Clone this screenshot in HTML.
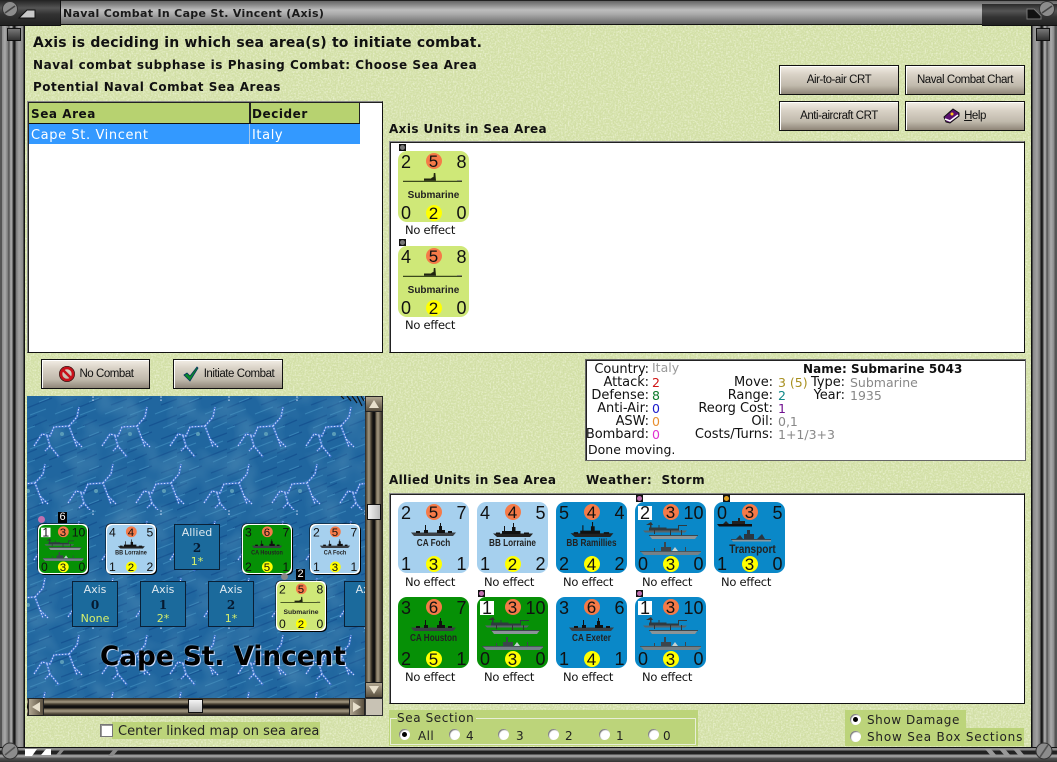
<!DOCTYPE html>
<html><head><meta charset="utf-8"><title>Naval Combat</title>
<style>
html,body{margin:0;padding:0;background:#8a8a8a}
#p{position:relative;width:1057px;height:762px;overflow:hidden;background:#d2dfa6;font-family:"DejaVu Sans","Liberation Sans",sans-serif;color:#000}
#p div,#p span,#p svg{position:absolute}
.t{white-space:nowrap;line-height:14px}
.h{font-weight:bold;color:#111}
.box{background:#fff;border:1px solid #555;box-shadow:inset 1px 1px 0 #222;box-sizing:border-box}
.btn{box-sizing:border-box;border:1px solid #111;background:linear-gradient(#f3eee6 0,#d9d2c6 30%,#c0b9ac 70%,#8f8678 100%);font:11.5px "Liberation Sans",sans-serif;letter-spacing:-.45px;color:#111;text-align:center;line-height:28px;height:30px;box-shadow:inset 1px 1px 0 #fff}
.c{width:71px;height:71px;border-radius:9px;font:18px/18px "Liberation Sans",sans-serif;color:#111}
.c span{text-align:center;white-space:nowrap}
.c .o,.c .y{width:16px;height:16px;left:27.500px;border-radius:50%;font-size:17px;line-height:17px}
.c .o{top:2px;background:#f57a48}
.c .y{top:54px;background:#ff0;line-height:17px}
.c .l{left:3px}.c .r{right:2.500px}.c .tp{top:2px}.c .bt{top:53px}
.c .w{left:3px;top:4px;background:#fff;width:14px;height:14px;line-height:15px}
.c .n{left:0;width:71px;top:36px;font:bold 10px/12px "Liberation Sans",sans-serif;color:#222;transform:scaleX(.82)}
.c .n.s{top:39px;transform:none}
.ne{font:11.500px/14px "DejaVu Sans",sans-serif;letter-spacing:-.25px;color:#111;white-space:nowrap}
.ax{box-sizing:border-box;width:46px;height:46px;background:#1b6a9c;border:1px solid #0a2036;color:#dfe9ef;text-align:center;font:11px/14px "DejaVu Sans",sans-serif}
.ax span{left:0;width:44px}
.ax .a{top:1px}.ax .b{top:16px;font-weight:bold;font-size:12px;color:#061a30;font-family:"DejaVu Serif","DejaVu Sans",serif}.ax .d{top:30px;color:#d6f06c}
.rad{width:11px;height:11px;border-radius:50%;background:#fff;box-shadow:inset 1px 1px 1px #777}
.rad.on::after{content:"";position:absolute;left:3px;top:3px;width:5px;height:5px;border-radius:50%;background:#000}
.lb{font:12px/14px "DejaVu Sans",sans-serif;color:#222;white-space:nowrap;letter-spacing:.4px}
.ir{font:13px/13px "DejaVu Sans",sans-serif;letter-spacing:-.05px;color:#111;white-space:nowrap;text-align:right}
.iv{font:12.500px/13px "DejaVu Sans",sans-serif;white-space:nowrap}
.bd{width:50px;height:50px;background:#fff;border-radius:5px;box-shadow:1px 1px 0 #000,-.5px -.5px 0 #000}
.mc{transform:scale(.676);transform-origin:0 0;top:129px}
</style></head><body><div id="p">

<svg width="0" height="0" style="left:0;top:0"><defs>
<symbol id="sub" viewBox="0 0 59 16"><path d="M0 14.800H59V16H0Z" fill="#3c4a1c"/><path d="M21 14.800V12.500h7l1-1 1.500-.5.300-4h1.500l.700 7.800Z" fill="#20240f"/><path d="M54 14h5v1h-5Z" fill="#8a8f70"/></symbol>
<symbol id="ca" viewBox="0 0 45 14"><path d="M0 9.500H45L42 13H3Z" fill="#3a3f44"/><path d="M13 10V7h1V2h1v5h2v3ZM26 10V7h2V3h1V0h1v3h1v4h3v3ZM5 8h4v2H5ZM37 8h4v2h-4Z" fill="#111"/></symbol>
<symbol id="bb" viewBox="0 0 40 14"><path d="M0 10.500H40L37 14H4Z" fill="#222"/><path d="M9 11V8h2V3h1v5h7V4h1V0h1v4h1.500v4h5v3ZM3 9.500h4V11H3ZM31 9.500h5V11h-5Z" fill="#111"/></symbol>
<symbol id="cv" viewBox="0 0 61 44"><path d="M3 9.500H47L45 11.500H5Z" fill="#59646a"/><path d="M9 9.500V6.500h1V3h1.500V6.500h7V4h1V6.500h7V7.500H38V4h9V5H39V9.500Z" fill="#2f3a40"/><path d="M6 4 11 1 13 4ZM14 9v4h1V9ZM30 9v5h1V9ZM41 9v5h1V9Z" fill="#333"/><path d="M9 14H58L55 18H12Z" fill="#8b9498"/><path d="M9 14H58V15H9Z" fill="#3c464c"/><path d="M0 30H61V31.500L58 34H4Z" fill="#748188"/><path d="M0 30H61V30.800H0Z" fill="#3d484e"/><path d="M21 30V26h3V21h2V26h5V30ZM45 30V26h1V30ZM14 30V27h1V30Z" fill="#3c464c"/><path d="M32 30 35 26 38 30Z" fill="#c4d0d0"/></symbol>
<symbol id="tr" viewBox="0 0 61 34"><path d="M0 7H35V9.500H2Z" fill="#111"/><path d="M6 7 9 4 12 7ZM15 7V4H21V1h2V4h5V7Z" fill="#222"/><path d="M14 22H54V24.500H16Z" fill="#8b98a0"/><path d="M14 22H54V23H14Z" fill="#3a4650"/><path d="M19 22l4-4 3 4ZM27 22V17h3V13h3V17h4V22ZM40 22l5-5 3 5Z" fill="#2a3640"/></symbol>
<symbol id="noi" viewBox="0 0 16 16"><circle cx="8" cy="8" r="6" fill="none" stroke="#c8101a" stroke-width="2.600"/><path d="M3.500 3.500 12.500 12.500" stroke="#c8101a" stroke-width="2.600"/><circle cx="8" cy="8" r="7.600" fill="none" stroke="#300" stroke-width=".7"/></symbol>
<pattern id="sea" width="68" height="114" patternUnits="userSpaceOnUse">
<g fill="none" stroke="#3f74d4" stroke-width="2.200" opacity=".8">
<path d="M7 50 15 38 23 40 27 31 42 30 47 43 55 51M42 30 50 21 52 11M20 40 23 50 32 61M23 50 18 55M47 43 50 51"/>
<path d="M-27 107-19 95-11 97-7 88 8 87 13 100 21 108M8 87 16 78 18 68M-14 97-11 107-2 118M-11 107-16 112M13 100 16 108"/>
<path d="M41 107 49 95 57 97 61 88 76 87 81 100 89 108M76 87 84 78 86 68M54 97 57 107 66 118M57 107 52 112"/>
</g>
<g fill="none" stroke="#d3e2ff" stroke-width="1" stroke-dasharray="1.600 1.500">
<path d="M7 50 15 38 23 40 27 31 42 30 47 43 55 51M42 30 50 21 52 11M20 40 23 50 32 61M23 50 18 55M47 43 50 51"/>
<path d="M-27 107-19 95-11 97-7 88 8 87 13 100 21 108M8 87 16 78 18 68M-14 97-11 107-2 118M-11 107-16 112M13 100 16 108"/>
<path d="M41 107 49 95 57 97 61 88 76 87 81 100 89 108M76 87 84 78 86 68M54 97 57 107 66 118M57 107 52 112"/>
<path d="M66 5V-4M-2 5V-4"/>
</g><circle cx="35" cy="38" r="2" fill="#5a9cb8"/><circle cx="1" cy="95" r="2" fill="#5a9cb8"/><circle cx="69" cy="95" r="2" fill="#5a9cb8"/></pattern>
<pattern id="rain" width="50" height="34" patternUnits="userSpaceOnUse">
<g stroke="#13508f" stroke-width="1.300" fill="none"><path d="M0 12 25 2M22 30 50 19M6 30 20 24M34 9 50 3M-2 24 10 19"/></g>
<g stroke="#3c89bb" stroke-width="1" fill="none"><path d="M3 19 19 13M28 18 46 11M12 6 22 2M36 32 50 26M0 33 8 30"/></g>
</pattern>
<filter id="nz" x="0" y="0" width="100%" height="100%"><feTurbulence type="fractalNoise" baseFrequency=".6" numOctaves="2" seed="4"/><feColorMatrix values="0 0 0 0 .9 0 0 0 0 .94 0 0 0 0 .74 0 0 0 1.700 -.7"/></filter>
<filter id="mot" x="0" y="0" width="100%" height="100%"><feTurbulence type="fractalNoise" baseFrequency=".035" numOctaves="2" seed="9"/><feColorMatrix values="0 0 0 0 .1 0 0 0 0 .3 0 0 0 0 .5 0 0 0 2.200 -.9"/></filter>
</defs></svg>

<svg width="1057" height="762" style="left:0;top:0"><rect width="1057" height="762" filter="url(#nz)"/></svg>

<!-- frame -->
<div style="left:0;top:0;width:25px;height:762px;background:linear-gradient(90deg,#555 0,#555 2px,#8a8a8a 2px,#aaa 5px,#777 8px,#444 9px,#999 10px,#a8a8a8 12px,#333 13px,#111 15px,#777 16px,#a2a2a2 19px,#888 23px,#111 24px,#111 25px)"></div>
<div style="left:1031px;top:0;width:26px;height:762px;background:linear-gradient(90deg,#111 0,#111 1px,#888 2px,#a2a2a2 6px,#777 9px,#111 10px,#333 12px,#a8a8a8 13px,#999 15px,#444 16px,#777 17px,#aaa 20px,#8a8a8a 23px,#555 24px)"></div>
<div style="left:0;top:0;width:1057px;height:25px;box-sizing:border-box;border-top:1px solid #222;border-bottom:1px solid #111;background:linear-gradient(#666 0,#808080 3px,#bdbdbd 9px,#ababab 13px,#8a8a8a 18px,#6a6a6a 23px)"></div>
<div style="left:0;top:0;width:60px;height:25px;border-right:1px solid #111;border-bottom:1px solid #111;background:linear-gradient(#222 0,#555 8px,#333 14px,#222 24px)"></div>
<div style="left:982px;top:4px;width:75px;height:21px;border-bottom:1px solid #111;background:linear-gradient(#2a2a2a 0,#555 7px,#333 13px,#222 21px)"></div>
<svg width="60" height="25" style="left:0;top:0"><circle cx="10" cy="9" r="7.500" fill="#8c8c8c" stroke="#333"/><path d="M5 13 15 6" stroke="#444" stroke-width="1.600"/><path d="M19 18 27 10H35V18Z" fill="#c9c9c9" stroke="#111"/></svg>
<svg width="60" height="25" style="left:997px;top:0"><circle cx="50" cy="9" r="7.500" fill="#8c8c8c" stroke="#333"/><path d="M45 13 55 6" stroke="#444" stroke-width="1.600"/><path d="M30 9H37L44 16V19H30Z" fill="#111" stroke="#777"/></svg>
<div style="left:7px;top:28px;width:14px;height:13px;background:linear-gradient(#777,#333);border:1px solid #111;box-sizing:border-box"></div>
<div style="left:1036px;top:28px;width:14px;height:13px;background:linear-gradient(#777,#333);border:1px solid #111;box-sizing:border-box"></div>
<div style="left:0;top:747px;width:1057px;height:15px;border-top:1px solid #111;box-sizing:border-box;background:linear-gradient(#888 0,#888 2px,#222 3px,#222 6px,#999 7px,#999 9px,#555 10px,#333 14px)"></div>
<svg width="120" height="15" style="left:22px;top:747px"><path d="M3 2H15L10 9H3ZM19 8l5-6h5v6Z" fill="#fff"/><path d="M34 8l5-6h4l-5 6ZM86 9l6-7h5l-6 7Z" fill="#888"/></svg>
<svg width="50" height="15" style="left:985px;top:747px"><path d="M0 2h6l6 7H6ZM14 2h6l6 7h-6ZM28 2h6l6 7h-6Z" fill="#999"/></svg>
<svg width="26" height="26" style="left:1031px;top:736px"><circle cx="13" cy="15" r="8" fill="#8c8c8c" stroke="#333"/><path d="M9 21 17 9" stroke="#555" stroke-width="1.600"/></svg>
<svg width="26" height="26" style="left:0;top:736px"><circle cx="10" cy="15" r="8" fill="#8c8c8c" stroke="#333"/><path d="M5 19 15 11" stroke="#555" stroke-width="1.600"/></svg>

<div class="t" style="left:63px;top:7px;font-weight:bold;font-size:11px;color:#1a1a1a;letter-spacing:.32px">Naval Combat In Cape St. Vincent (Axis)</div>
<div class="t h" style="left:33px;top:35px;font-size:14px;line-height:16px;letter-spacing:.18px">Axis is deciding in which sea area(s) to initiate combat.</div>
<div class="t h" style="left:33px;top:58px;font-size:12px;letter-spacing:.54px">Naval combat subphase is Phasing Combat: Choose Sea Area</div>
<div class="t h" style="left:33px;top:80px;font-size:12px;letter-spacing:.5px">Potential Naval Combat Sea Areas</div>

<!-- list -->
<div class="box" style="left:27px;top:101px;width:356px;height:252px;border-color:#111;border-top-color:#888;border-left-color:#888"></div>
<div style="left:29px;top:103px;width:331px;height:21px;background:#b7d270;border-bottom:1px solid #111;box-sizing:border-box"></div>
<div style="left:249px;top:103px;width:2px;height:20px;background:#222"></div>
<div style="left:359px;top:103px;width:1px;height:20px;background:#222"></div>
<div class="t" style="left:31px;top:107px;font-weight:bold;font-size:12px;letter-spacing:.55px;color:#111">Sea Area</div>
<div class="t" style="left:252px;top:107px;font-weight:bold;font-size:12px;letter-spacing:.55px;color:#111">Decider</div>
<div style="left:29px;top:124px;width:331px;height:20px;background:#3399ff"></div>
<div style="left:249px;top:124px;width:1px;height:20px;background:#a9c8e8"></div>
<div class="t" style="left:31px;top:129px;font-size:13px;letter-spacing:.6px;color:#fff">Cape St. Vincent</div>
<div class="t" style="left:252px;top:129px;font-size:13px;letter-spacing:.6px;color:#fff">Italy</div>

<!-- top buttons -->
<div class="btn" style="left:779px;top:65px;width:120px">Air-to-air CRT</div>
<div class="btn" style="left:905px;top:65px;width:120px">Naval Combat Chart</div>
<div class="btn" style="left:779px;top:101px;width:120px">Anti-aircraft CRT</div>
<div class="btn" style="left:905px;top:101px;width:120px;padding-left:20px"><u>H</u>elp</div>
<svg width="18" height="16" style="left:943px;top:108px"><path d="M1 9 10 1 16 5 16 8 7 15 3 14Z" fill="#5a1070" stroke="#111"/><path d="M2 11 7 13 15 7" fill="none" stroke="#fff" stroke-width="1.500"/><circle cx="9" cy="6" r="1.500" fill="#ffc820"/></svg>

<!-- action buttons -->
<div class="btn" style="left:41px;top:359px;width:109px;padding-left:22px">No Combat</div>
<div class="btn" style="left:173px;top:359px;width:110px;padding-left:22px">Initiate Combat</div>
<svg width="16" height="16" style="left:59px;top:366px"><use href="#noi"/></svg>
<svg width="16" height="16" style="left:183px;top:366px"><path d="M1 9 4 7 7 10 14 1 15 2 7 15Z" fill="#0a8a2a" stroke="#05335f" stroke-width=".8"/></svg>

<!-- axis panel -->
<div class="t h" style="left:389px;top:122px;font-size:12px;letter-spacing:.4px">Axis Units in Sea Area</div>
<div class="box" style="left:389px;top:141px;width:636px;height:212px;border-color:#111;border-top-color:#888;border-left-color:#888"></div>
<div style="left:399px;top:144px;width:7px;height:7px;background:#111"></div><div style="left:400px;top:145px;width:5px;height:5px;background:#777;border-radius:50%"></div>
<div class="c" style="left:398px;top:151px;background:#cfe878"><span class="l tp">2</span><span class="o">5</span><span class="r tp">8</span><svg width="59" height="16" style="left:5px;top:15px"><use href="#sub"/></svg><span class="n s">Submarine</span><span class="l bt">0</span><span class="y">2</span><span class="r bt">0</span></div>
<div class="ne" style="left:405px;top:223px">No effect</div>
<div style="left:399px;top:239px;width:7px;height:7px;background:#111"></div><div style="left:400px;top:240px;width:5px;height:5px;background:#777;border-radius:50%"></div>
<div class="c" style="left:398px;top:246px;background:#cfe878"><span class="l tp">4</span><span class="o">5</span><span class="r tp">8</span><svg width="59" height="16" style="left:5px;top:15px"><use href="#sub"/></svg><span class="n s">Submarine</span><span class="l bt">0</span><span class="y">2</span><span class="r bt">0</span></div>
<div class="ne" style="left:405px;top:318px">No effect</div>

<!-- info -->
<div class="box" style="left:585px;top:359px;width:441px;height:102px;background:#fff;border-color:#666"></div>
<div class="ir" style="left:549px;top:363px;width:100px">Country:</div><div class="iv" style="left:652px;top:361px;color:#999">Italy</div>
<div class="ir" style="left:549px;top:376px;width:100px">Attack:</div><div class="iv" style="left:652px;top:376px;color:#d01515">2</div>
<div class="ir" style="left:549px;top:389px;width:100px">Defense:</div><div class="iv" style="left:652px;top:389px;color:#0a7a2a">8</div>
<div class="ir" style="left:549px;top:402px;width:100px">Anti-Air:</div><div class="iv" style="left:652px;top:402px;color:#1a1acc">0</div>
<div class="ir" style="left:549px;top:415px;width:100px">ASW:</div><div class="iv" style="left:652px;top:415px;color:#e89030">0</div>
<div class="ir" style="left:549px;top:428px;width:100px">Bombard:</div><div class="iv" style="left:652px;top:428px;color:#e030d0">0</div>
<div class="iv" style="left:588px;top:443px;color:#111">Done moving.</div>
<div class="ir" style="left:673px;top:376px;width:100px">Move:</div><div class="iv" style="left:778px;top:376px;color:#a89020">3 (5)</div>
<div class="ir" style="left:673px;top:389px;width:100px">Range:</div><div class="iv" style="left:778px;top:389px;color:#108888">2</div>
<div class="ir" style="left:673px;top:402px;width:100px">Reorg Cost:</div><div class="iv" style="left:778px;top:402px;color:#701090">1</div>
<div class="ir" style="left:673px;top:415px;width:100px">Oil:</div><div class="iv" style="left:778px;top:415px;color:#888">0,1</div>
<div class="ir" style="left:673px;top:428px;width:100px">Costs/Turns:</div><div class="iv" style="left:778px;top:428px;color:#888">1+1/3+3</div>
<div class="ir" style="left:745px;top:376px;width:100px">Type:</div><div class="iv" style="left:850px;top:376px;color:#888">Submarine</div>
<div class="ir" style="left:745px;top:389px;width:100px">Year:</div><div class="iv" style="left:850px;top:389px;color:#888">1935</div>
<div class="iv" style="left:803px;top:363px;font-weight:bold;font-size:12px;color:#111;letter-spacing:.05px">Name: Submarine 5043</div>

<!-- allied panel -->
<div class="t h" style="left:389px;top:473px;font-size:12px;letter-spacing:.33px">Allied Units in Sea Area</div>
<div class="t h" style="left:586px;top:473px;font-size:12px;letter-spacing:.5px">Weather:&nbsp; Storm</div>
<div class="box" style="left:389px;top:493px;width:636px;height:211px;border-color:#111;border-top-color:#888;border-left-color:#888"></div>

<div class="c" style="left:398px;top:502px;background:#a6d0ee"><span class="l tp">2</span><span class="o">5</span><span class="r tp">7</span><svg width="45" height="14" style="left:13px;top:21px"><use href="#ca"/></svg><span class="n">CA Foch</span><span class="l bt">1</span><span class="y">3</span><span class="r bt">1</span></div>
<div class="ne" style="left:405px;top:575px">No effect</div>
<div class="c" style="left:477px;top:502px;background:#a6d0ee"><span class="l tp">4</span><span class="o">4</span><span class="r tp">5</span><svg width="40" height="14" style="left:16px;top:21px"><use href="#bb"/></svg><span class="n">BB Lorraine</span><span class="l bt">1</span><span class="y">2</span><span class="r bt">2</span></div>
<div class="ne" style="left:484px;top:575px">No effect</div>
<div class="c" style="left:556px;top:502px;background:#0a88c8"><span class="l tp">5</span><span class="o">4</span><span class="r tp">4</span><svg width="44" height="15" style="left:14px;top:20px"><use href="#bb"/></svg><span class="n">BB Ramillies</span><span class="l bt">2</span><span class="y">4</span><span class="r bt">2</span></div>
<div class="ne" style="left:563px;top:575px">No effect</div>
<div style="left:636px;top:495px;width:7px;height:7px;background:#111"></div><div style="left:637px;top:496px;width:5px;height:5px;background:#c070b0;border-radius:50%"></div>
<div class="c" style="left:635px;top:502px;background:#0a88c8"><span class="w">2</span><span class="o">3</span><span class="r tp">10</span><svg width="61" height="44" style="left:5px;top:19px"><use href="#cv"/></svg><span class="l bt">0</span><span class="y">3</span><span class="r bt">0</span></div>
<div class="ne" style="left:642px;top:575px">No effect</div>
<div style="left:723px;top:495px;width:7px;height:7px;background:#111"></div><div style="left:724px;top:496px;width:5px;height:5px;background:#e0a020;border-radius:50%"></div>
<div class="c" style="left:714px;top:502px;background:#0a88c8"><span class="l tp">0</span><span class="o">3</span><span class="r tp">5</span><svg width="61" height="34" style="left:3px;top:15px"><use href="#tr"/></svg><span class="n" style="font-size:12px;top:41px;left:3px;transform:scaleX(.84)">Transport</span><span class="l bt">1</span><span class="y">3</span><span class="r bt">0</span></div>
<div class="ne" style="left:721px;top:575px">No effect</div>

<div class="c" style="left:398px;top:597px;background:#069006"><span class="l tp">3</span><span class="o">6</span><span class="r tp">7</span><svg width="45" height="14" style="left:13px;top:21px"><use href="#ca"/></svg><span class="n">CA Houston</span><span class="l bt">2</span><span class="y">5</span><span class="r bt">1</span></div>
<div class="ne" style="left:405px;top:670px">No effect</div>
<div style="left:478px;top:590px;width:7px;height:7px;background:#111"></div><div style="left:479px;top:591px;width:5px;height:5px;background:#c070b0;border-radius:50%"></div>
<div class="c" style="left:477px;top:597px;background:#069006"><span class="w">1</span><span class="o">3</span><span class="r tp">10</span><svg width="61" height="44" style="left:5px;top:19px"><use href="#cv"/></svg><span class="l bt">0</span><span class="y">3</span><span class="r bt">0</span></div>
<div class="ne" style="left:484px;top:670px">No effect</div>
<div class="c" style="left:556px;top:597px;background:#0a88c8"><span class="l tp">3</span><span class="o">6</span><span class="r tp">6</span><svg width="45" height="14" style="left:13px;top:21px"><use href="#ca"/></svg><span class="n">CA Exeter</span><span class="l bt">1</span><span class="y">4</span><span class="r bt">1</span></div>
<div class="ne" style="left:563px;top:670px">No effect</div>
<div style="left:636px;top:590px;width:7px;height:7px;background:#111"></div><div style="left:637px;top:591px;width:5px;height:5px;background:#c070b0;border-radius:50%"></div>
<div class="c" style="left:635px;top:597px;background:#0a88c8"><span class="w">1</span><span class="o">3</span><span class="r tp">10</span><svg width="61" height="44" style="left:5px;top:19px"><use href="#cv"/></svg><span class="l bt">0</span><span class="y">3</span><span class="r bt">0</span></div>
<div class="ne" style="left:642px;top:670px">No effect</div>

<!-- map -->
<div style="left:27px;top:396px;width:338px;height:302px;overflow:hidden;background:#20669f">
<svg width="338" height="302" style="left:0;top:0"><rect width="338" height="302" fill="url(#rain)" opacity=".8"/><rect width="338" height="302" filter="url(#mot)" opacity=".5"/><rect width="338" height="302" fill="url(#sea)"/></svg>
<svg width="25" height="14" style="left:313px;top:0"><path d="M1 0 4 3M7 0 11 5M12 0 17 7M17 0 22 10M21 0 24 5" stroke="#111" stroke-width="1.200"/></svg>

<div class="ax" style="left:147px;top:128px"><span class="a">Allied</span><span class="b">2</span><span class="d">1*</span></div>
<div class="ax" style="left:45px;top:185px"><span class="a">Axis</span><span class="b">0</span><span class="d">None</span></div>
<div class="ax" style="left:113px;top:185px"><span class="a">Axis</span><span class="b">1</span><span class="d">2*</span></div>
<div class="ax" style="left:181px;top:185px"><span class="a">Axis</span><span class="b">2</span><span class="d">1*</span></div>
<div class="ax" style="left:317px;top:185px"><span class="a">Axis</span></div>

<div class="bd" style="left:11px;top:128px"></div>
<div class="c mc" style="left:12px;background:#069006"><span class="w">1</span><span class="o">3</span><span class="r tp">10</span><svg width="61" height="44" style="left:5px;top:19px"><use href="#cv"/></svg><span class="l bt">0</span><span class="y">3</span><span class="r bt">0</span></div>
<div class="bd" style="left:79px;top:128px"></div>
<div class="c mc" style="left:80px;background:#a6d0ee"><span class="l tp">4</span><span class="o">4</span><span class="r tp">5</span><svg width="40" height="14" style="left:16px;top:21px"><use href="#bb"/></svg><span class="n">BB Lorraine</span><span class="l bt">1</span><span class="y">2</span><span class="r bt">2</span></div>
<div class="bd" style="left:215px;top:128px"></div>
<div class="c mc" style="left:216px;background:#069006"><span class="l tp">3</span><span class="o">6</span><span class="r tp">7</span><svg width="45" height="14" style="left:13px;top:21px"><use href="#ca"/></svg><span class="n">CA Houston</span><span class="l bt">2</span><span class="y">5</span><span class="r bt">1</span></div>
<div class="bd" style="left:283px;top:128px"></div>
<div class="c mc" style="left:284px;background:#a6d0ee"><span class="l tp">2</span><span class="o">5</span><span class="r tp">7</span><svg width="45" height="14" style="left:13px;top:21px"><use href="#ca"/></svg><span class="n">CA Foch</span><span class="l bt">1</span><span class="y">3</span><span class="r bt">1</span></div>
<div class="bd" style="left:249px;top:185px"></div>
<div class="c mc" style="left:250px;top:186px;background:#cfe878"><span class="l tp">2</span><span class="o">5</span><span class="r tp">8</span><svg width="59" height="16" style="left:5px;top:15px"><use href="#sub"/></svg><span class="n s">Submarine</span><span class="l bt">0</span><span class="y">2</span><span class="r bt">0</span></div>

<div style="left:11px;top:120px;width:7px;height:7px;border-radius:50%;background:#c070b0"></div>
<div style="left:31px;top:116px;width:9px;height:11px;background:#000;color:#fff;font:11px/11px 'Liberation Sans',sans-serif;text-align:center">6</div>
<div style="left:254px;top:177px;width:7px;height:7px;border-radius:50%;background:#888"></div>
<div style="left:269px;top:173px;width:9px;height:11px;background:#000;color:#fff;font:11px/11px 'Liberation Sans',sans-serif;text-align:center">2</div>

<div class="t" style="left:73px;top:245px;font-weight:bold;font-size:26.300px;line-height:32px;color:#000;text-shadow:-1px -1px 0 #fff3,1px 1px 0 #cfe0ff">Cape St. Vincent</div>
</div>

<!-- scrollbars -->
<div style="left:365px;top:698px;width:18px;height:18px;background:#c8c2b4;border:1px solid #333;box-sizing:border-box"></div>
<div style="left:365px;top:396px;width:18px;height:302px;background:linear-gradient(90deg,#222 0,#6e6450 2px,#a49a84 4px,#4a4234 6px,#111 8px,#111 10px,#6e6450 11px,#a49a84 13px,#4a4234 16px,#222 18px)"></div>
<div style="left:365px;top:396px;width:18px;height:16px;background:linear-gradient(#b0a690,#5a5040);border:1px solid #222;box-sizing:border-box"></div>
<svg width="18" height="16" style="left:365px;top:396px"><path d="M4 12 9 4 14 12Z" fill="#e8e0cc"/></svg>
<div style="left:365px;top:682px;width:18px;height:16px;background:linear-gradient(#b0a690,#5a5040);border:1px solid #222;box-sizing:border-box"></div>
<svg width="18" height="16" style="left:365px;top:682px"><path d="M4 4 14 4 9 12Z" fill="#e8e0cc"/></svg>
<div style="left:367px;top:504px;width:14px;height:16px;background:linear-gradient(90deg,#f4f4f4,#bbb);border:1px solid #111;box-sizing:border-box"></div>

<div style="left:27px;top:698px;width:338px;height:18px;background:linear-gradient(#222 0,#6e6450 2px,#a49a84 4px,#4a4234 6px,#111 8px,#111 10px,#6e6450 11px,#a49a84 13px,#4a4234 16px,#222 18px)"></div>
<div style="left:28px;top:698px;width:16px;height:18px;background:linear-gradient(90deg,#b0a690,#5a5040);border:1px solid #222;box-sizing:border-box"></div>
<svg width="16" height="18" style="left:28px;top:698px"><path d="M12 4 4 9 12 14Z" fill="#e8e0cc"/></svg>
<div style="left:349px;top:698px;width:16px;height:18px;background:linear-gradient(90deg,#b0a690,#5a5040);border:1px solid #222;box-sizing:border-box"></div>
<svg width="16" height="18" style="left:349px;top:698px"><path d="M4 4 12 9 4 14Z" fill="#e8e0cc"/></svg>
<div style="left:188px;top:699px;width:15px;height:14px;background:linear-gradient(#f4f4f4,#bbb);border:1px solid #111;box-sizing:border-box"></div>

<!-- center checkbox -->
<div style="left:112px;top:722px;width:208px;height:17px;background:#bcd47a"></div>
<div style="left:100px;top:724px;width:11px;height:11px;background:#fff;border:1px solid #777;box-shadow:inset 1px 1px 0 #999"></div>
<div class="lb" style="left:118px;top:725px;font-size:13px;letter-spacing:.05px">Center linked map on sea area</div>

<!-- sea section -->
<div style="left:389px;top:710px;width:309px;height:36px;background:#bcd47a"></div>
<div style="left:390px;top:718px;width:306px;height:27px;border:1px solid #e8eed8;box-sizing:border-box"></div>
<div class="lb" style="left:397px;top:711px;background:#bcd47a;font-size:12px;letter-spacing:.6px;padding-right:2px">Sea Section</div>
<div class="rad on" style="left:399px;top:729px"></div><div class="lb" style="left:418px;top:729px">All</div>
<div class="rad" style="left:449px;top:729px"></div><div class="lb" style="left:466px;top:729px">4</div>
<div class="rad" style="left:498px;top:729px"></div><div class="lb" style="left:516px;top:729px">3</div>
<div class="rad" style="left:548px;top:729px"></div><div class="lb" style="left:565px;top:729px">2</div>
<div class="rad" style="left:599px;top:729px"></div><div class="lb" style="left:616px;top:729px">1</div>
<div class="rad" style="left:648px;top:729px"></div><div class="lb" style="left:663px;top:729px">0</div>

<!-- show -->
<div style="left:845px;top:710px;width:121px;height:19px;background:#bcd47a"></div>
<div style="left:845px;top:728px;width:179px;height:18px;background:#bcd47a"></div>
<div class="rad on" style="left:850px;top:714px"></div><div class="lb" style="left:867px;top:713px;letter-spacing:.55px">Show Damage</div>
<div class="rad" style="left:850px;top:731px"></div><div class="lb" style="left:867px;top:730px;letter-spacing:.8px">Show Sea Box Sections</div>

</div></body></html>
